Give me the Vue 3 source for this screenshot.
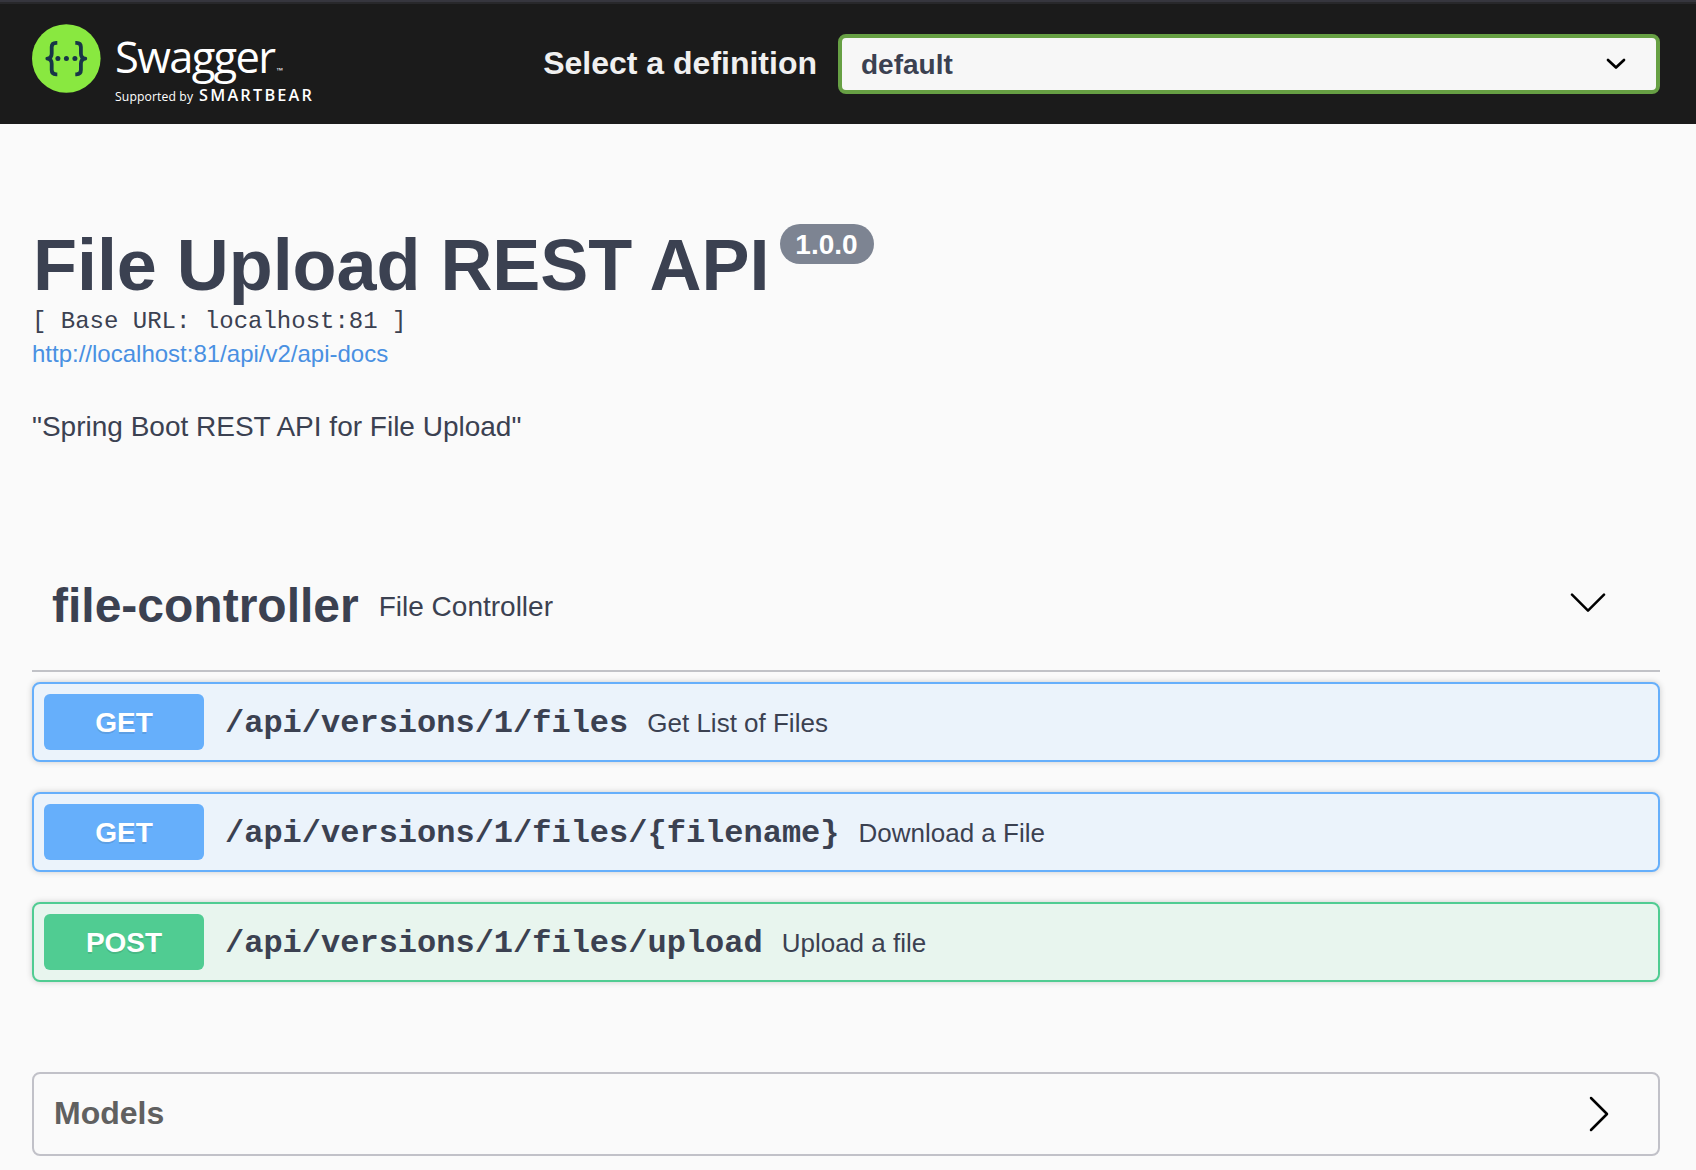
<script setup>
const operations = [
  { method: 'GET', path: '/api/versions/1/files', summary: 'Get List of Files' },
  { method: 'GET', path: '/api/versions/1/files/{filename}', summary: 'Download a File' },
  { method: 'POST', path: '/api/versions/1/files/upload', summary: 'Upload a file' }
]
</script>

<template>
  <div class="page">
    <header class="topbar">
      <a class="logo" aria-label="Swagger">
        <svg width="284" height="84" viewBox="32 22 284 84">
          <circle cx="66.3" cy="58.5" r="34.3" fill="#89e840" />
          <g fill="none" stroke="#173647" stroke-width="3.8" stroke-linejoin="round">
            <path d="M57.300 42.900h-1.200c-3 0-4.400 1.500-4.400 4.200v6.300c0 3-1.200 4.900-4.400 5.200c3.200.3 4.400 2.200 4.400 5.200v6.300c0 2.700 1.400 4.200 4.400 4.200h1.200" />
            <path d="M75.300 42.900h1.200c3 0 4.400 1.500 4.400 4.200v6.300c0 3 1.200 4.900 4.400 5.200c-3.200.3-4.400 2.200-4.400 5.200v6.300c0 2.700-1.400 4.200-4.400 4.200h-1.200" />
          </g>
          <g fill="#173647">
            <circle cx="57.900" cy="58.600" r="2.500" />
            <circle cx="66.400" cy="58.600" r="2.500" />
            <circle cx="74.900" cy="58.600" r="2.500" />
          </g>
          <g fill="#fff" font-family="'Open Sans', sans-serif">
            <text x="115" y="72.700" font-size="43.500" textLength="161">Swagger</text>
            <text x="276.500" y="73.200" font-size="7" textLength="6.500" lengthAdjust="spacingAndGlyphs">™</text>
            <text x="115" y="100.700" font-size="12.200" textLength="78">Supported by</text>
            <text x="199" y="100.700" font-size="16.300" font-weight="600" textLength="113" lengthAdjust="spacing">SMARTBEAR</text>
          </g>
        </svg>
      </a>
      <label class="definition">
        <span class="definition-label">Select a definition</span>
        <span class="select">
          <span class="select-value">default</span>
          <svg width="20" height="12" viewBox="0 0 20 12">
            <path d="M2 2l8 7.500 8-7.500" fill="none" stroke="#000" stroke-width="2.700" stroke-linecap="round" stroke-linejoin="round" />
          </svg>
        </span>
      </label>
    </header>

    <main class="wrapper">
      <section class="info">
        <div class="title-row">
          <h1>File Upload REST API</h1>
          <span class="version">1.0.0</span>
        </div>
        <div class="base-url">[ Base URL: localhost:81 ]</div>
        <a class="docs-link">http://localhost:81/api/v2/api-docs</a>
        <p class="description">"Spring Boot REST API for File Upload"</p>
      </section>

      <section>
        <div class="tag">
          <h2>file-controller</h2>
          <span class="tag-text">File Controller</span>
          <svg class="tag-arrow" width="36" height="20" viewBox="0 0 36 20">
            <path d="M2 1.700l16 16 16-16" fill="none" stroke="#000" stroke-width="2.500" stroke-linecap="round" stroke-linejoin="round" />
          </svg>
        </div>
        <div class="operations">
          <div v-for="op in operations" :key="op.path" class="op" :class="op.method.toLowerCase()">
            <span class="method">{{ op.method }}</span>
            <span class="path">{{ op.path }}</span>
            <span class="summary">{{ op.summary }}</span>
          </div>
        </div>
      </section>

      <section class="models">
        <h4>Models</h4>
        <svg width="20" height="36" viewBox="0 0 20 36">
          <path d="M2 2l16 16-16 16" fill="none" stroke="#000" stroke-width="2.500" stroke-linecap="round" stroke-linejoin="round" />
        </svg>
      </section>
    </main>
  </div>
</template>

<style>
body {
  margin: 0;
  background: #fafafa;
}
</style>

<style scoped>
.page {
  height: 1170px;
  overflow: hidden;
  background: #fafafa;
  color: #3b4151;
  font-family: "Liberation Sans", Arial, sans-serif;
}
h1, h2, h4, p {
  margin: 0;
}
svg {
  display: block;
  flex: none;
}
.topbar {
  box-sizing: border-box;
  height: 124px;
  padding: 0 36px 0 32px;
  display: flex;
  justify-content: space-between;
  align-items: flex-start;
  background: linear-gradient(#36363e 0 2px, #28282b 2px 4px, #1b1b1b 4px);
}
.logo {
  padding-top: 22px;
}
.definition {
  display: flex;
  align-items: center;
  padding-top: 34px;
}
.definition-label {
  margin: 0 21px 2px 0;
  font-size: 32px;
  line-height: 36px;
  font-weight: 700;
  color: #f0f0f0;
}
.select {
  box-sizing: border-box;
  width: 822px;
  height: 60px;
  padding: 0 30px 0 19px;
  display: flex;
  align-items: center;
  justify-content: space-between;
  border: 4px solid #67a044;
  border-radius: 8px;
  background: #f7f7f7;
  font-size: 28px;
  line-height: 32px;
  font-weight: 700;
}
.select-value {
  padding-top: 2px;
}
.wrapper {
  padding: 100px 36px 0 32px;
}
.info {
  height: 318px;
}
.title-row {
  display: flex;
  align-items: flex-start;
}
h1 {
  box-sizing: border-box;
  width: 738px;
  padding-left: 1px;
  font-size: 72px;
  line-height: 82px;
  letter-spacing: -0.050px;
  white-space: nowrap;
}
.version {
  box-sizing: border-box;
  width: 94px;
  height: 40px;
  margin-left: 10px;
  padding-right: 1px;
  border-radius: 20px;
  background: #7d8492;
  color: #fff;
  font-size: 28px;
  line-height: 42px;
  font-weight: 700;
  text-align: center;
}
.base-url {
  padding-top: 1px;
  font: 24px/30px "Liberation Mono", "Courier New", monospace;
  white-space: pre;
}
.docs-link {
  display: block;
  font-size: 24px;
  line-height: 34px;
  color: #4990e2;
}
.description {
  margin-top: 40px;
  font-size: 28px;
  line-height: 32px;
}
.tag {
  box-sizing: border-box;
  height: 130px;
  padding: 0 54px 0 20px;
  display: flex;
  align-items: center;
  border-bottom: 2px solid #c1c2c7;
}
h2 {
  font-size: 48px;
  line-height: 56px;
}
.tag-text {
  margin-left: 20px;
  padding-top: 2px;
  font-size: 28px;
}
.tag-arrow {
  margin: 0 0 6px auto;
}
.operations {
  margin-top: 10px;
  display: flex;
  flex-direction: column;
  gap: 30px;
}
.op {
  box-sizing: border-box;
  height: 80px;
  padding: 0 10px;
  display: flex;
  align-items: center;
  border: 2px solid;
  border-radius: 8px;
  box-shadow: 0 0 6px rgba(0, 0, 0, 0.19);
}
.get {
  border-color: #66affb;
  background: #ebf3fb;
}
.post {
  border-color: #50cc92;
  background: #e8f5ee;
}
.method {
  box-sizing: border-box;
  width: 160px;
  height: 56px;
  padding-top: 1px;
  border-radius: 6px;
  color: #fff;
  font-size: 28px;
  line-height: 56px;
  font-weight: 700;
  text-align: center;
  text-shadow: 0 2px 0 rgba(0, 0, 0, 0.1);
}
.get .method {
  background: #66affb;
}
.post .method {
  background: #50cc92;
}
.path {
  margin: 3px 19px 0 21px;
  font: 700 32px/36px "Liberation Mono", "Courier New", monospace;
}
.summary {
  margin-top: 2px;
  font-size: 26px;
}
.models {
  box-sizing: border-box;
  height: 84px;
  margin-top: 90px;
  padding: 0 49px 0 20px;
  display: flex;
  align-items: center;
  justify-content: space-between;
  border: 2px solid #c1c1c8;
  border-radius: 8px;
}
h4 {
  margin-bottom: 2px;
  font-size: 32px;
  line-height: 36px;
  color: #606060;
}
</style>
